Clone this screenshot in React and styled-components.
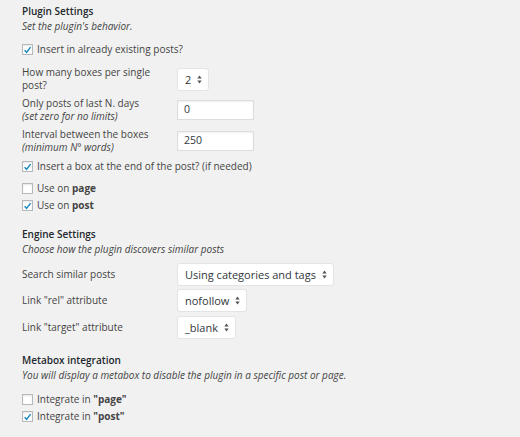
import React from "react";
import styled, { createGlobalStyle } from "styled-components";

const Global = createGlobalStyle`
  html, body { margin: 0; padding: 0; background: #f1f1f1; }
  body { font-family: "Open Sans", "Liberation Sans", sans-serif; color: #444; }
`;

const Page = styled.div`
  padding: 3px 0 0 22px;
  font-size: 10px;
  line-height: 13px;
`;

const Section = styled.section`
  margin-top: ${(p) => p.$mt || 0}px;
`;

const Heading = styled.h3`
  margin: 0;
  font-size: 10px;
  font-weight: 600;
  color: #23282d;
  line-height: 16px;
`;

const Sub = styled.p`
  margin: 0 0 ${(p) => p.$mb || 8}px;
  font-style: italic;
  line-height: 14px;
`;

const CheckRow = styled.label`
  display: flex;
  align-items: center;
  gap: 4px;
  height: 17px;
  margin-top: ${(p) => p.$mt || 0}px;
`;

const Box = styled.span`
  width: 11px;
  height: 11px;
  box-sizing: border-box;
  border: 1px solid #b4b9be;
  background: #fff;
  box-shadow: inset 0 1px 2px rgba(0,0,0,0.1);
  display: flex;
  align-items: center;
  justify-content: center;
`;

const FieldRow = styled.div`
  display: grid;
  grid-template-columns: 155px auto;
  align-items: center;
  min-height: ${(p) => p.$h || 27}px;
  margin-top: ${(p) => p.$mt || 0}px;
`;

const Label = styled.div`
  line-height: 13px;
`;

const Hint = styled.div`
  font-style: italic;
`;

const Input = styled.div`
  width: 77px;
  height: 20px;
  box-sizing: border-box;
  border: 1px solid #ddd;
  background: #fff;
  box-shadow: inset 0 1px 2px rgba(0,0,0,0.07);
  padding: 0 6px;
  display: flex;
  align-items: center;
  font-size: 10.5px;
  color: #32373c;
`;

const Select = styled.div`
  display: inline-flex;
  align-items: center;
  justify-self: start;
  gap: 6px;
  height: 23px;
  box-sizing: border-box;
  padding: 0 6px 0 7px;
  border: 1px solid #e4e4e4;
  border-radius: 3px;
  background: #fff;
  font-size: 11px;
  color: #32373c;
`;

const Check = () => (
  <svg width="10" height="10" viewBox="0 0 10 10">
    <path d="M1.8 5.2 L4 7.6 L8.4 1.8" fill="none" stroke="#1e8cbe" strokeWidth="1.7" />
  </svg>
);

const Arrows = () => (
  <svg width="5" height="9" viewBox="0 0 5 9">
    <path d="M2.5 0.5 L4.7 3.6 L0.3 3.6 Z M2.5 8.5 L4.7 5.4 L0.3 5.4 Z" fill="#555" />
  </svg>
);

const Checkbox = ({ checked, children, mt }) => (
  <CheckRow $mt={mt}>
    <Box>{checked && <Check />}</Box>
    <span>{children}</span>
  </CheckRow>
);

export default function App() {
  return (
    <Page>
      <Global />
      <Section>
        <Heading>Plugin Settings</Heading>
        <Sub $mb={8}>Set the plugin's behavior.</Sub>
        <Checkbox checked>Insert in already existing posts?</Checkbox>
        <FieldRow $h={30} $mt={6}>
          <Label>How many boxes per single<br />post?</Label>
          <Select>2 <Arrows /></Select>
        </FieldRow>
        <FieldRow $h={31}>
          <Label>Only posts of last N. days<Hint>(set zero for no limits)</Hint></Label>
          <Input>0</Input>
        </FieldRow>
        <FieldRow $h={31}>
          <Label>Interval between the boxes<Hint>(minimum N° words)</Hint></Label>
          <Input>250</Input>
        </FieldRow>
        <Checkbox checked mt={2}>Insert a box at the end of the post? (if needed)</Checkbox>
        <Checkbox mt={5}>Use on <b>page</b></Checkbox>
        <Checkbox checked>Use on <b>post</b></Checkbox>
      </Section>
      <Section $mt={12}>
        <Heading>Engine Settings</Heading>
        <Sub $mb={5}>Choose how the plugin discovers similar posts</Sub>
        <FieldRow $h={26}>
          <Label>Search similar posts</Label>
          <Select>Using categories and tags <Arrows /></Select>
        </FieldRow>
        <FieldRow>
          <Label>Link "rel" attribute</Label>
          <Select>nofollow <Arrows /></Select>
        </FieldRow>
        <FieldRow>
          <Label>Link "target" attribute</Label>
          <Select>_blank <Arrows /></Select>
        </FieldRow>
      </Section>
      <Section $mt={11}>
        <Heading>Metabox integration</Heading>
        <Sub $mb={9}>You will display a metabox to disable the plugin in a specific post or page.</Sub>
        <Checkbox>Integrate in <b>"page"</b></Checkbox>
        <Checkbox checked>Integrate in <b>"post"</b></Checkbox>
      </Section>
    </Page>
  );
}
